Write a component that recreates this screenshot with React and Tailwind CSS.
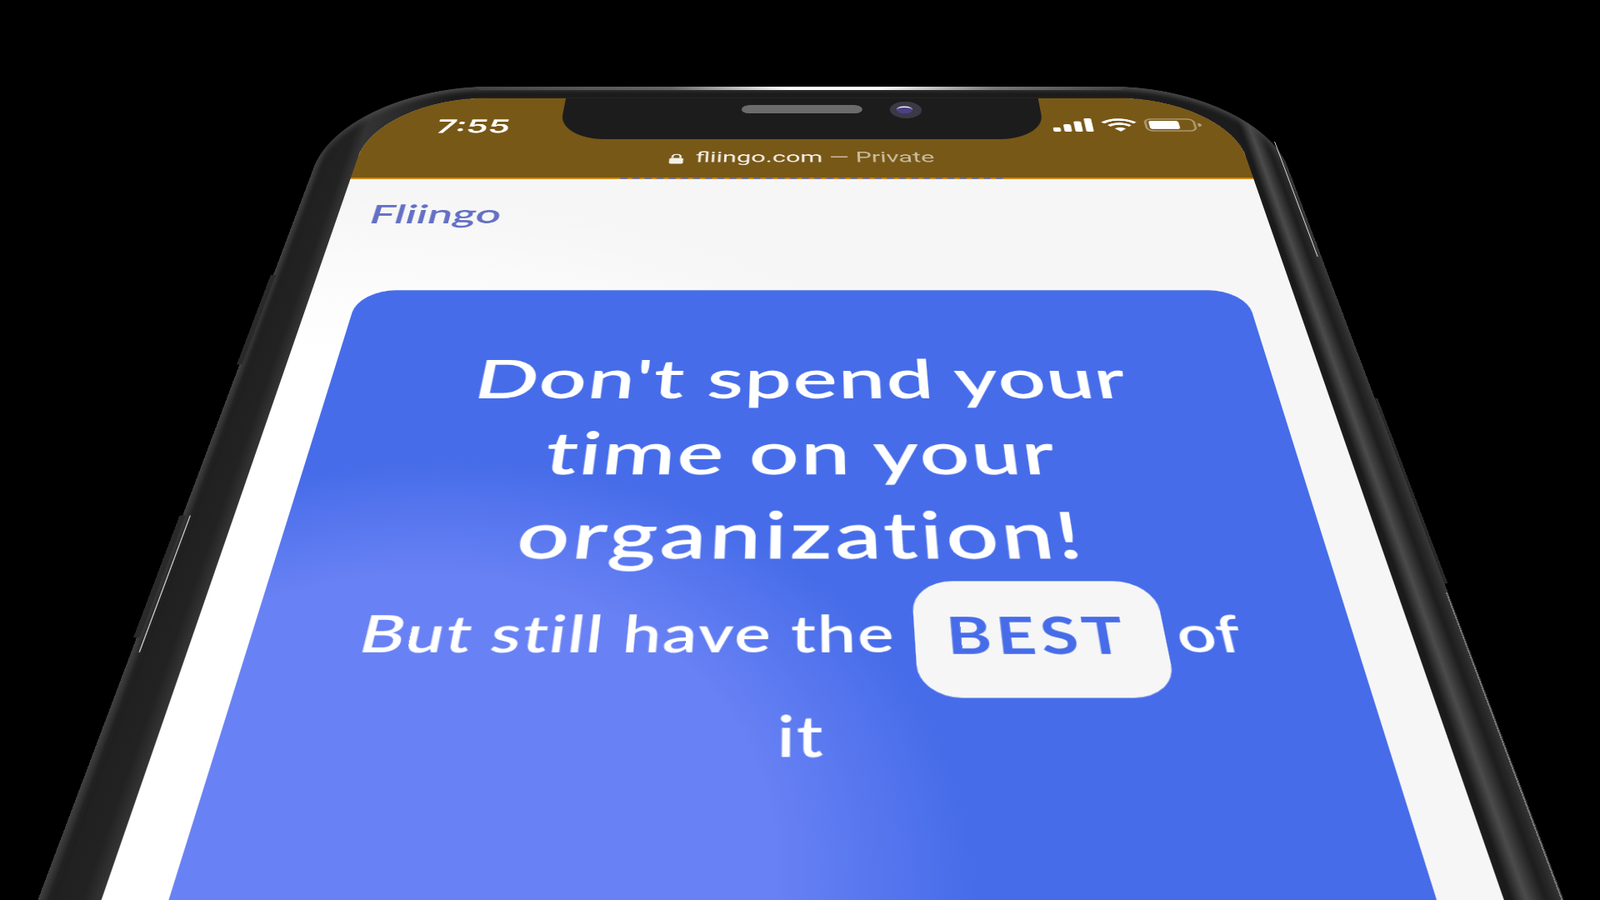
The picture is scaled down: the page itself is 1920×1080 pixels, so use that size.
// Flat phone page, laid out in its own px, then tilted back with one matrix3d
const SignalIcon = () => (
  <svg viewBox="0 0 18 11" className="w-[18px] h-[11px]" fill="#fff">
    <rect x="0" y="7.5" width="3.2" height="3.5" rx="0.8" />
    <rect x="4.7" y="5" width="3.2" height="6" rx="0.8" />
    <rect x="9.4" y="2.5" width="3.2" height="8.5" rx="0.8" />
    <rect x="14.1" y="0" width="3.2" height="11" rx="0.8" />
  </svg>
);

const WifiIcon = () => (
  <svg viewBox="0 0 16 11" className="w-[16px] h-[11px]" fill="none" stroke="#fff" strokeWidth="1.7">
    <path d="M1 3.8C5 0.2 11 0.2 15 3.8" />
    <path d="M3.4 6.2C6 3.9 10 3.9 12.6 6.2" />
    <path d="M8 10.8L5.6 8.4C7 7.3 9 7.3 10.4 8.4Z" fill="#fff" stroke="none" />
  </svg>
);

const BatteryIcon = () => (
  <svg viewBox="0 0 26 11" className="w-[25px] h-[11px]" fill="none">
    <rect x="0.5" y="0.5" width="22" height="10" rx="2.8" stroke="#fff" strokeOpacity="0.4" />
    <rect x="2" y="2" width="13.5" height="7" rx="1.4" fill="#fff" />
    <path d="M24 3.8C25 4.2 25.6 4.8 25.6 5.5C25.6 6.2 25 6.8 24 7.2Z" fill="#fff" fillOpacity="0.45" />
  </svg>
);

const LockIcon = () => (
  <svg viewBox="0 0 10 12" className="w-[7px] h-[9px]" fill="#f4f1ea">
    <path d="M2.6 5V3.4a2.4 2.4 0 0 1 4.8 0V5" fill="none" stroke="#f4f1ea" strokeWidth="1.2" />
    <rect x="0.8" y="5" width="8.4" height="6.4" rx="1.2" />
  </svg>
);

const Notch = () => (
  <div className="relative w-[209px] h-[34px] shrink-0 bg-[#1c1c1c] rounded-b-[20px] flex justify-center pt-[6px]">
    <div className="w-[53px] h-[7px] rounded-full bg-[#6b6b6b]" />
    <div className="absolute left-[143px] top-[3px] w-[14px] h-[14px] rounded-full bg-[#3a3a46] flex items-center justify-center">
      <div className="w-[7px] h-[6px] rounded-full bg-[#4d3f85] border-t border-white" />
    </div>
  </div>
);

const StatusBar = () => (
  <div className="bg-[#785817] h-[65px] flex flex-col font-['Inter',sans-serif]">
    <div className="h-[34px] flex">
      <div className="w-[83px] pl-[30px] pt-[15px] text-[15px] leading-[18px] font-semibold text-white">7:55</div>
      <Notch />
      <div className="w-[83px] flex justify-end items-start gap-[3px] pt-[17px] pr-[14px]">
        <SignalIcon />
        <WifiIcon />
        <BatteryIcon />
      </div>
    </div>
    <div className="flex-1 flex items-center justify-center gap-[5px] text-[10.8px] leading-[16px] text-[#f4f1ea] font-['Roboto',sans-serif]">
      <LockIcon />
      <span>
        fliingo.com <span className="text-[#c9bd9f]">— Private</span>
      </span>
    </div>
    <div className="h-px bg-[#d9901a] flex justify-center">
      <div className="ml-[8px] w-[159px] border-t border-dashed border-[#4a6ae0]/70" />
    </div>
  </div>
);

const HeroCard = () => (
  <div className="mx-[18px] h-[400px] rounded-t-[14px] pt-[32px] text-center text-white font-['Lato',sans-serif] [font-variant-ligatures:none] bg-[radial-gradient(circle_at_50px_263px,#6881f4_112px,#466ce9_166px)]">
    <h1 className="mx-auto max-w-[260px] text-[30px] leading-[40px] font-semibold tracking-[0.4px]">
      Don't spend your <span className="tracking-[0.6px]">time on your</span> <span className="tracking-[0.95px]">organization!</span>
    </h1>
    <p className="mx-auto mt-[4px] max-w-[282px] text-[21px] leading-[40px] font-semibold tracking-[0.5px]">
      But still have the{" "}
      <span className="bg-[#f6f6f6] text-[#466ce9] pl-[10px] pr-[11px] pt-[9.5px] pb-[13.8px] rounded-[13px] font-bold tracking-[1.5px]">BEST</span>{" "}
      <span className="-ml-[2px]">of</span> it
    </p>
  </div>
);

export default function App() {
  return (
    <div className="w-screen h-screen overflow-hidden bg-black">
      <div className="relative w-[408px] h-[480px] pt-[10px] px-[16.5px] rounded-t-[66px] origin-top-left [transform:matrix3d(2.8907,0,0,0,-0.98022,1.377,0,-0.00102,0,0,1,0,444.8,111.7,0,1.0765)] shadow-[inset_0_3px_4px_#484848] bg-[linear-gradient(90deg,#3a3a3a_0,#202020_3px,#222_12px,#333_16.5px,#1c1c1c_50px,#1c1c1c_391px,#1a1a1a_394px,#4c4c4c_398px,#1e1e1e_403px,#2e2e2e_408px)]">
        {/* top edge glint */}
        <div className="absolute top-0 left-[60px] right-[60px] h-[2.5px] rounded-full bg-[linear-gradient(90deg,#444,#666_30%,#fff_48%,#fff_62%,#777_80%,#444)]" />
        {/* side buttons and hairlines */}
        <div className="absolute -left-[1px] top-[142px] w-[1.5px] h-[55px] bg-[#2a2a2a]" />
        <div className="absolute -left-[1px] top-[276px] w-[1.5px] h-[54px] bg-[#2a2a2a]" />
        <div className="absolute left-[2px] top-[276px] w-px h-[60px] scale-x-[0.3] bg-[#eee]" />
        <div className="absolute -right-[1px] top-[216px] w-[1.5px] h-[91px] bg-[#2a2a2a]" />
        <div className="absolute right-[1.5px] top-[46px] w-px h-[84px] scale-x-[0.3] bg-[#eee]" />
        <div className="absolute right-[0.5px] top-[311px] w-px h-[169px] scale-x-[0.4] bg-[#777]" />

        <div className="h-[470px] rounded-t-[48px] overflow-hidden bg-[radial-gradient(circle_at_0px_400px,#fff_0,#fff_220px,#f6f6f6_320px)]">
          <StatusBar />
          <div className="h-[77px] pt-[13px] px-[13.5px] text-[18px] leading-[24px] font-semibold text-[#6470c4] font-['Lato',sans-serif]">Fliingo</div>
          <HeroCard />
        </div>
      </div>
    </div>
  );
}
